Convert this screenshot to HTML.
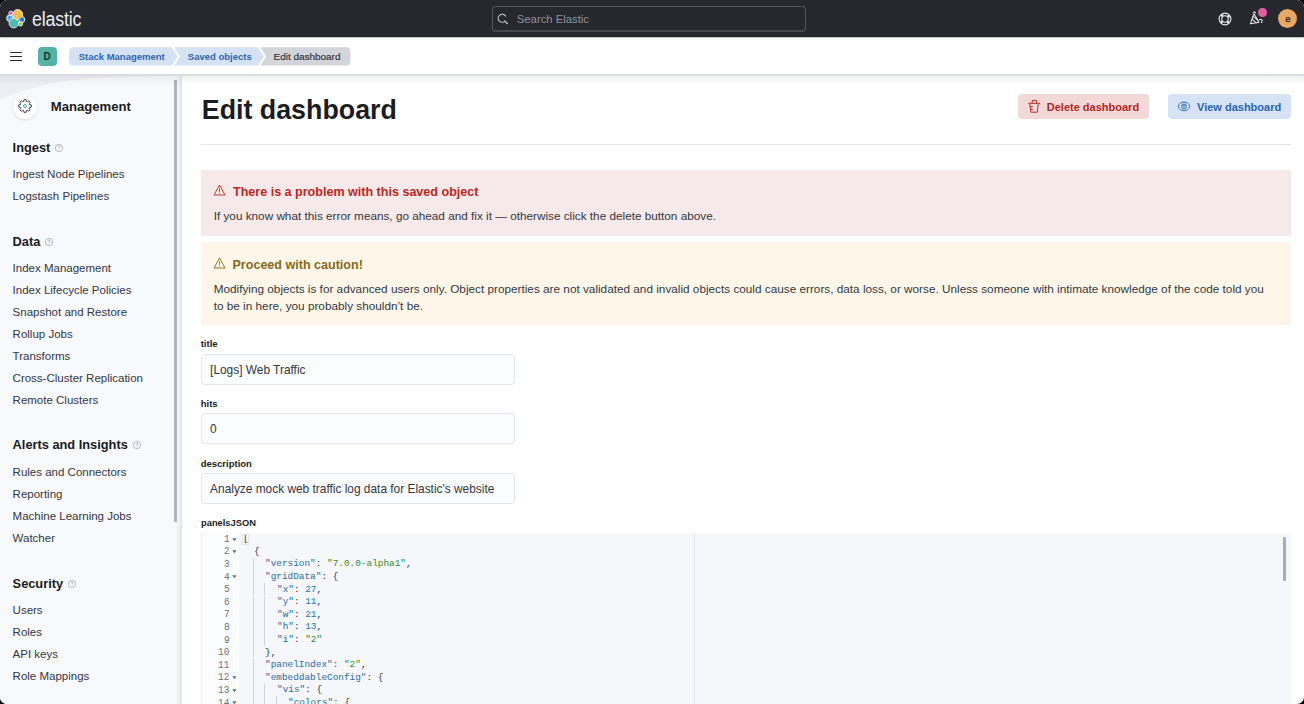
<!DOCTYPE html>
<html><head><meta charset="utf-8">
<style>
*{box-sizing:border-box;margin:0;padding:0}
html,body{width:1304px;height:704px;overflow:hidden;background:#000}
body{font-family:"Liberation Sans",sans-serif}
#app{position:absolute;left:0;top:0;width:1304px;height:704px;border-radius:7px;overflow:hidden;background:#fff}
.a{position:absolute}
.t{position:absolute;white-space:pre}
</style></head><body><div id="app">
<div class="a" style="left:0px;top:0px;width:1304px;height:37px;background:#26282d"></div>
<div class="a" style="left:0px;top:36px;width:1304px;height:1px;background:#1d1e22;box-shadow:0 1px 1.5px rgba(0,0,0,.35);z-index:4"></div>
<svg class="a" style="left:5px;top:8px" width="22" height="22" viewBox="0 0 22 22">
<g stroke="#fff" stroke-width="0.9">
<circle cx="12.7" cy="6.5" r="4.9" fill="#f0bf4b"/>
<circle cx="4.9" cy="10.2" r="3.3" fill="#4fa7ef"/>
<circle cx="16.8" cy="11.6" r="3.0" fill="#2f77d2"/>
<circle cx="8.8" cy="15.2" r="4.7" fill="#4cbcb0"/>
<circle cx="15.5" cy="15.9" r="2.1" fill="#8bc53f"/>
<circle cx="5.9" cy="5.2" r="2.0" fill="#e6468e"/>
</g>
<circle cx="12.7" cy="6.5" r="4.5" fill="#f0bf4b"/>
<circle cx="8.8" cy="15.2" r="4.3" fill="#4cbcb0"/>
</svg>
<div class="t" style="left:31.80px;top:9.17px;font-size:20px;line-height:20px;font-weight:normal;color:#eceef1;letter-spacing:-0.2px;transform:scaleX(0.89);transform-origin:0 0;">elastic</div>
<div class="a" style="left:492px;top:6px;width:314px;height:25.5px;border:1px solid #53565d;border-bottom:2px solid #46494f;border-radius:4px;background:#26282d"></div>
<svg class="a" style="left:497px;top:13px" width="12" height="12" viewBox="0 0 12 12"><circle cx="5.2" cy="5.3" r="4" fill="none" stroke="#c9cbd0" stroke-width="1.1" stroke-dasharray="20 4" transform="rotate(40 5.2 5.3)"/><path d="M8 8.3 L10.8 11" stroke="#c9cbd0" stroke-width="1.1"/></svg>
<div class="t" style="left:516.80px;top:13.63px;font-size:11.3px;line-height:11.3px;font-weight:normal;color:#8f9196;">Search Elastic</div>
<svg class="a" style="left:1216.5px;top:10.5px" width="16" height="16" viewBox="0 0 16 16" fill="none" stroke="#e8e9ec"><circle cx="8" cy="8" r="5.9" stroke-width="1.1"/><circle cx="8" cy="8" r="3.2" stroke-width="1.1"/><circle cx="8" cy="8" r="4.55" stroke-width="1.8" stroke-dasharray="2.4 4.75" stroke-dashoffset="-2.38"/></svg>
<svg class="a" style="left:1246px;top:6px" width="24" height="22" viewBox="0 0 24 22" fill="none" stroke="#e8e9ec" stroke-width="1.05" stroke-linejoin="round" stroke-linecap="round"><path d="M4.4 17.8 L7.9 7.6 L13 16.2 Z"/><path d="M6.1 13.2 L10.2 16.9 M7.1 10.3 L11.6 14"/><path d="M7.2 6.3 Q8.4 5.4 9.6 6.7"/><path d="M13.4 13.6 Q15.8 13 16.1 14.3 L15.6 16.6"/></svg>
<div class="a" style="left:1258.2px;top:8.2px;width:8.6px;height:8.6px;border-radius:50%;background:#dd5fa0"></div>
<div class="a" style="left:1277.8px;top:8.8px;width:19.6px;height:19.6px;border-radius:50%;background:#eba865"></div>
<div class="t" style="left:1285.20px;top:13.96px;font-size:9.5px;line-height:9.5px;font-weight:normal;color:#1a1c21;-webkit-text-stroke:0.25px #1a1c21;">e</div>
<div class="a" style="left:0px;top:37px;width:1304px;height:37px;background:#fff;z-index:2"></div>
<div class="a" style="left:0px;top:73.8px;width:1304px;height:2px;background:#d8dbe1;z-index:2"></div>
<div class="a" style="left:0px;top:75.8px;width:1304px;height:10px;background:linear-gradient(to bottom, rgba(60,60,50,.07), rgba(60,60,50,.025) 60%, rgba(60,60,50,0));z-index:2"></div>
<div class="a" style="left:9.5px;top:51.5px;width:12.5px;height:1.5px;background:#25282f;border-radius:1px;z-index:3"></div>
<div class="a" style="left:9.5px;top:55.6px;width:12.5px;height:1.5px;background:#25282f;border-radius:1px;z-index:3"></div>
<div class="a" style="left:9.5px;top:59.5px;width:12.5px;height:1.5px;background:#25282f;border-radius:1px;z-index:3"></div>
<div class="a" style="left:38px;top:47px;width:18.5px;height:18.5px;background:#54b3a6;border-radius:4px;z-index:3"></div>
<div class="t" style="left:43.60px;top:51.83px;font-size:10px;line-height:10px;font-weight:bold;color:#1c2e2b;z-index:3;">D</div>
<svg class="a" style="left:0;top:37px;z-index:3" width="400" height="37" viewBox="0 37 400 37">
<path d="M73.2 47.2 H171.8 L177.8 56.4 L171.8 65.6 H73.2 Q69.2 65.6 69.2 61.6 V51.2 Q69.2 47.2 73.2 47.2 Z" fill="#d4e2f3"/>
<path d="M174 47.2 H258 L264 56.4 L258 65.6 H174 L180 56.4 Z" fill="#d4e2f3"/>
<path d="M260.3 47.2 H346.4 Q350.4 47.2 350.4 51.2 V61.6 Q350.4 65.6 346.4 65.6 H260.3 L266.3 56.4 Z" fill="#d3d5da"/>
</svg>
<div class="t" style="left:78.70px;top:52.06px;font-size:9.5px;line-height:9.5px;font-weight:bold;color:#2e65ad;z-index:3;">Stack Management</div>
<div class="t" style="left:187.80px;top:52.06px;font-size:9.5px;line-height:9.5px;font-weight:bold;color:#2e65ad;z-index:3;">Saved objects</div>
<div class="t" style="left:273.50px;top:51.67px;font-size:9.96px;line-height:9.96px;font-weight:normal;color:#343741;z-index:3;-webkit-text-stroke:0.2px #343741;">Edit dashboard</div>
<div class="a" style="left:0px;top:74px;width:182px;height:630px;background:#f8f9fc"></div>
<svg class="a" style="left:0;top:74px" width="178" height="40" viewBox="0 74 178 40"><path d="M0 74 H178 V76 C120 76 70 78 40 86 C25 90 12 95 0 99.5 Z" fill="#eceff4"/></svg>
<div class="a" style="left:175px;top:74px;width:7px;height:630px;background:linear-gradient(to right, rgba(220,224,230,0) 0%, rgba(220,224,230,.35) 55%, rgba(214,218,225,.75) 100%)"></div>
<div class="a" style="left:174px;top:80px;width:3px;height:442px;background:#b0b4bc"></div>
<div class="a" style="left:12.6px;top:94.5px;width:24.6px;height:24.6px;border-radius:50%;background:#fff;box-shadow:0 1px 3px rgba(0,0,0,.12)"></div>
<svg class="a" style="left:16.9px;top:98.3px" width="16" height="16" viewBox="0 0 16 16"><path fill="none" stroke="#343741" stroke-width="0.95" stroke-linejoin="round" d="M6.61 3.51 L6.92 1.69 L9.08 1.69 L9.39 3.51 L10.19 3.84 L11.69 2.77 L13.23 4.31 L12.16 5.81 L12.49 6.61 L14.31 6.92 L14.31 9.08 L12.49 9.39 L12.16 10.19 L13.23 11.69 L11.69 13.23 L10.19 12.16 L9.39 12.49 L9.08 14.31 L6.92 14.31 L6.61 12.49 L5.81 12.16 L4.31 13.23 L2.77 11.69 L3.84 10.19 L3.51 9.39 L1.69 9.08 L1.69 6.92 L3.51 6.61 L3.84 5.81 L2.77 4.31 L4.31 2.77 L5.81 3.84 Z"/><circle cx="8" cy="8" r="1.5" fill="none" stroke="#40ada5" stroke-width="1"/></svg>
<div class="t" style="left:50.80px;top:99.91px;font-size:13.1px;line-height:13.1px;font-weight:bold;color:#1a1c21;">Management</div>
<div class="t" style="left:12.60px;top:141.66px;font-size:12.8px;line-height:12.8px;font-weight:bold;color:#1a1c21;">Ingest</div>
<svg class="a" style="left:54.30px;top:142.60px" width="10" height="10" viewBox="0 0 10 10" fill="none" stroke="#a3a8b0" stroke-width="0.75"><circle cx="5" cy="5" r="3.7"/><path d="M3.9 4.1 Q3.9 3 5 3 Q6.1 3 6.1 4 Q6.1 4.7 5 5.2 V5.9 M5 6.6 V7.2"/></svg>
<div class="t" style="left:12.60px;top:168.77px;font-size:11.5px;line-height:11.5px;font-weight:normal;color:#343741;">Ingest Node Pipelines</div>
<div class="t" style="left:12.60px;top:190.77px;font-size:11.5px;line-height:11.5px;font-weight:normal;color:#343741;">Logstash Pipelines</div>
<div class="t" style="left:12.60px;top:236.26px;font-size:12.8px;line-height:12.8px;font-weight:bold;color:#1a1c21;">Data</div>
<svg class="a" style="left:44.34px;top:237.20px" width="10" height="10" viewBox="0 0 10 10" fill="none" stroke="#a3a8b0" stroke-width="0.75"><circle cx="5" cy="5" r="3.7"/><path d="M3.9 4.1 Q3.9 3 5 3 Q6.1 3 6.1 4 Q6.1 4.7 5 5.2 V5.9 M5 6.6 V7.2"/></svg>
<div class="t" style="left:12.60px;top:263.37px;font-size:11.5px;line-height:11.5px;font-weight:normal;color:#343741;">Index Management</div>
<div class="t" style="left:12.60px;top:285.37px;font-size:11.5px;line-height:11.5px;font-weight:normal;color:#343741;">Index Lifecycle Policies</div>
<div class="t" style="left:12.60px;top:307.37px;font-size:11.5px;line-height:11.5px;font-weight:normal;color:#343741;">Snapshot and Restore</div>
<div class="t" style="left:12.60px;top:329.37px;font-size:11.5px;line-height:11.5px;font-weight:normal;color:#343741;">Rollup Jobs</div>
<div class="t" style="left:12.60px;top:351.37px;font-size:11.5px;line-height:11.5px;font-weight:normal;color:#343741;">Transforms</div>
<div class="t" style="left:12.60px;top:373.37px;font-size:11.5px;line-height:11.5px;font-weight:normal;color:#343741;">Cross-Cluster Replication</div>
<div class="t" style="left:12.60px;top:395.37px;font-size:11.5px;line-height:11.5px;font-weight:normal;color:#343741;">Remote Clusters</div>
<div class="t" style="left:12.60px;top:439.46px;font-size:12.8px;line-height:12.8px;font-weight:bold;color:#1a1c21;">Alerts and Insights</div>
<svg class="a" style="left:131.81px;top:440.40px" width="10" height="10" viewBox="0 0 10 10" fill="none" stroke="#a3a8b0" stroke-width="0.75"><circle cx="5" cy="5" r="3.7"/><path d="M3.9 4.1 Q3.9 3 5 3 Q6.1 3 6.1 4 Q6.1 4.7 5 5.2 V5.9 M5 6.6 V7.2"/></svg>
<div class="t" style="left:12.60px;top:466.57px;font-size:11.5px;line-height:11.5px;font-weight:normal;color:#343741;">Rules and Connectors</div>
<div class="t" style="left:12.60px;top:488.57px;font-size:11.5px;line-height:11.5px;font-weight:normal;color:#343741;">Reporting</div>
<div class="t" style="left:12.60px;top:510.57px;font-size:11.5px;line-height:11.5px;font-weight:normal;color:#343741;">Machine Learning Jobs</div>
<div class="t" style="left:12.60px;top:532.57px;font-size:11.5px;line-height:11.5px;font-weight:normal;color:#343741;">Watcher</div>
<div class="t" style="left:12.60px;top:578.16px;font-size:12.8px;line-height:12.8px;font-weight:bold;color:#1a1c21;">Security</div>
<svg class="a" style="left:67.11px;top:579.10px" width="10" height="10" viewBox="0 0 10 10" fill="none" stroke="#a3a8b0" stroke-width="0.75"><circle cx="5" cy="5" r="3.7"/><path d="M3.9 4.1 Q3.9 3 5 3 Q6.1 3 6.1 4 Q6.1 4.7 5 5.2 V5.9 M5 6.6 V7.2"/></svg>
<div class="t" style="left:12.60px;top:605.27px;font-size:11.5px;line-height:11.5px;font-weight:normal;color:#343741;">Users</div>
<div class="t" style="left:12.60px;top:627.27px;font-size:11.5px;line-height:11.5px;font-weight:normal;color:#343741;">Roles</div>
<div class="t" style="left:12.60px;top:649.27px;font-size:11.5px;line-height:11.5px;font-weight:normal;color:#343741;">API keys</div>
<div class="t" style="left:12.60px;top:671.27px;font-size:11.5px;line-height:11.5px;font-weight:normal;color:#343741;">Role Mappings</div>
<div class="t" style="left:201.80px;top:97.41px;font-size:26.8px;line-height:26.8px;font-weight:bold;color:#1a1c21;">Edit dashboard</div>
<div class="a" style="left:201px;top:143.5px;width:1090px;height:1px;background:#e3e8f0"></div>
<div class="a" style="left:1018px;top:94px;width:131px;height:25px;background:#f2d9d8;border-radius:4px"></div>
<svg class="a" style="left:1026px;top:99px" width="16" height="16" viewBox="0 0 16 16" fill="none" stroke="#b7302a" stroke-width="1" stroke-linejoin="round"><path d="M2.1 4.3 H14 M6.2 4.3 V1.4 H10.4 V4.3 M3.8 5 L4.9 13.2 H11.3 L12.2 5 M4.3 7.6 H6.8 M4.6 10.4 H6.8"/></svg>
<div class="t" style="left:1046.80px;top:101.59px;font-size:11px;line-height:11px;font-weight:bold;color:#b4251d;">Delete dashboard</div>
<div class="a" style="left:1168px;top:94px;width:122.5px;height:25px;background:#d5e3f4;border-radius:4px"></div>
<svg class="a" style="left:1176px;top:99px" width="16" height="15" viewBox="0 0 16 15" fill="none" stroke="#2f68ad" stroke-width="1"><path d="M2.2 7.4 C3.2 4.4 5.2 3.1 8 3.1 C10.8 3.1 12.8 4.4 13.8 7.4 C12.8 10.4 10.8 11.6 8 11.6 C5.2 11.6 3.2 10.4 2.2 7.4 Z"/><circle cx="8" cy="7.4" r="2.4"/><circle cx="8" cy="7.2" r="0.9" stroke-width="0.8"/></svg>
<div class="t" style="left:1197.00px;top:101.59px;font-size:11px;line-height:11px;font-weight:bold;color:#2a65ad;">View dashboard</div>
<div class="a" style="left:201px;top:169.5px;width:1090px;height:66.5px;background:#f6e9e9"></div>
<svg class="a" style="left:213px;top:184.4px" width="13" height="12" viewBox="0 0 13 12" fill="none" stroke="#bd271e" stroke-width="0.9"><path d="M6.5 1 L12 11 H1 Z"/><path d="M6.5 4.3 V7.8 M6.5 8.8 V9.7"/></svg>
<div class="t" style="left:233.00px;top:185.87px;font-size:12.56px;line-height:12.56px;font-weight:bold;color:#bd271e;">There is a problem with this saved object</div>
<div class="t" style="left:213.70px;top:210.35px;font-size:11.76px;line-height:11.76px;font-weight:normal;color:#343741;">If you know what this error means, go ahead and fix it — otherwise click the delete button above.</div>
<div class="a" style="left:201px;top:242.3px;width:1090px;height:83.2px;background:#fef7e9"></div>
<svg class="a" style="left:213px;top:257.4px" width="13" height="12" viewBox="0 0 13 12" fill="none" stroke="#8a6a0a" stroke-width="0.9"><path d="M6.5 1 L12 11 H1 Z"/><path d="M6.5 4.3 V7.8 M6.5 8.8 V9.7"/></svg>
<div class="t" style="left:232.50px;top:259.07px;font-size:12.56px;line-height:12.56px;font-weight:bold;color:#86691c;">Proceed with caution!</div>
<div class="t" style="left:213.70px;top:283.13px;font-size:11.78px;line-height:11.78px;font-weight:normal;color:#343741;">Modifying objects is for advanced users only. Object properties are not validated and invalid objects could cause errors, data loss, or worse. Unless someone with intimate knowledge of the code told you</div>
<div class="t" style="left:213.70px;top:299.53px;font-size:11.78px;line-height:11.78px;font-weight:normal;color:#343741;">to be in here, you probably shouldn’t be.</div>
<div class="t" style="left:200.70px;top:339.26px;font-size:9.5px;line-height:9.5px;font-weight:bold;color:#1a1c21;">title</div>
<div class="a" style="left:200.7px;top:354px;width:314.3px;height:31.3px;background:#fbfcfd;border:1px solid #e2e6ee;border-radius:4px"></div>
<div class="t" style="left:210.10px;top:364.73px;font-size:11.9px;line-height:11.9px;font-weight:normal;color:#343741;">[Logs] Web Traffic</div>
<div class="t" style="left:200.70px;top:398.96px;font-size:9.5px;line-height:9.5px;font-weight:bold;color:#1a1c21;">hits</div>
<div class="a" style="left:200.7px;top:413.2px;width:314.3px;height:31.3px;background:#fbfcfd;border:1px solid #e2e6ee;border-radius:4px"></div>
<div class="t" style="left:210.10px;top:423.93px;font-size:11.9px;line-height:11.9px;font-weight:normal;color:#343741;">0</div>
<div class="t" style="left:200.70px;top:458.66px;font-size:9.5px;line-height:9.5px;font-weight:bold;color:#1a1c21;">description</div>
<div class="a" style="left:200.7px;top:472.9px;width:314.3px;height:31.3px;background:#fbfcfd;border:1px solid #e2e6ee;border-radius:4px"></div>
<div class="t" style="left:210.10px;top:483.63px;font-size:11.9px;line-height:11.9px;font-weight:normal;color:#343741;">Analyze mock web traffic log data for Elastic&#x27;s website</div>
<div class="t" style="left:201.00px;top:518.79px;font-size:9.34px;line-height:9.34px;font-weight:bold;color:#1a1c21;">panelsJSON</div>
<div class="a" style="left:201px;top:532.7px;width:1090px;height:180px;background:#f5f7fa"></div>
<div class="a" style="left:201px;top:532.7px;width:38px;height:180px;background:#fbfcfd;border-left:1px solid #e9ecf1"></div>
<div class="a" style="left:694px;top:532.7px;width:1px;height:180px;background:#e3e6ed"></div>
<div class="a" style="left:1282.8px;top:537.3px;width:3.2px;height:43.5px;background:#a9adb6;border-radius:1px"></div>
<div class="t" style="left:223.75px;top:533.80px;font-size:10.4px;line-height:10.4px;font-weight:normal;color:#6a717d;font-family:'Liberation Mono',monospace;transform:scaleX(0.905);transform-origin:0 0;">1</div>
<svg class="a" style="left:232px;top:537.50px" width="5" height="3.5" viewBox="0 0 5 3.5"><path d="M0.2 0.3 H4.6 L2.4 3.2 Z" fill="#6a7079"/></svg>
<div class="t" style="left:242.80px;top:534.22px;font-size:9.9px;line-height:9.9px;font-weight:normal;color:#343741;font-family:'Liberation Mono',monospace;transform:scaleX(0.9515);transform-origin:0 0;"><span style="color:#343741">[</span></div>
<div class="t" style="left:223.75px;top:546.40px;font-size:10.4px;line-height:10.4px;font-weight:normal;color:#6a717d;font-family:'Liberation Mono',monospace;transform:scaleX(0.905);transform-origin:0 0;">2</div>
<svg class="a" style="left:232px;top:550.10px" width="5" height="3.5" viewBox="0 0 5 3.5"><path d="M0.2 0.3 H4.6 L2.4 3.2 Z" fill="#6a7079"/></svg>
<div class="t" style="left:254.10px;top:546.82px;font-size:9.9px;line-height:9.9px;font-weight:normal;color:#343741;font-family:'Liberation Mono',monospace;transform:scaleX(0.9515);transform-origin:0 0;"><span style="color:#343741">{</span></div>
<div class="t" style="left:223.75px;top:559.00px;font-size:10.4px;line-height:10.4px;font-weight:normal;color:#6a717d;font-family:'Liberation Mono',monospace;transform:scaleX(0.905);transform-origin:0 0;">3</div>
<div class="a" style="left:253.10000000000002px;top:557.7px;width:1px;height:12.6px;background:#d0d4db"></div>
<div class="t" style="left:265.40px;top:559.42px;font-size:9.9px;line-height:9.9px;font-weight:normal;color:#343741;font-family:'Liberation Mono',monospace;transform:scaleX(0.9515);transform-origin:0 0;"><span style="color:#2f6c9c">&quot;version&quot;</span><span style="color:#343741">:&nbsp;</span><span style="color:#3a8a36">&quot;7.0.0-alpha1&quot;</span><span style="color:#343741">,</span></div>
<div class="t" style="left:223.75px;top:571.60px;font-size:10.4px;line-height:10.4px;font-weight:normal;color:#6a717d;font-family:'Liberation Mono',monospace;transform:scaleX(0.905);transform-origin:0 0;">4</div>
<svg class="a" style="left:232px;top:575.30px" width="5" height="3.5" viewBox="0 0 5 3.5"><path d="M0.2 0.3 H4.6 L2.4 3.2 Z" fill="#6a7079"/></svg>
<div class="a" style="left:253.10000000000002px;top:570.3px;width:1px;height:12.6px;background:#d0d4db"></div>
<div class="t" style="left:265.40px;top:572.02px;font-size:9.9px;line-height:9.9px;font-weight:normal;color:#343741;font-family:'Liberation Mono',monospace;transform:scaleX(0.9515);transform-origin:0 0;"><span style="color:#2f6c9c">&quot;gridData&quot;</span><span style="color:#343741">:&nbsp;{</span></div>
<div class="t" style="left:223.75px;top:584.20px;font-size:10.4px;line-height:10.4px;font-weight:normal;color:#6a717d;font-family:'Liberation Mono',monospace;transform:scaleX(0.905);transform-origin:0 0;">5</div>
<div class="a" style="left:253.10000000000002px;top:582.9px;width:1px;height:12.6px;background:#d0d4db"></div>
<div class="a" style="left:264.40000000000003px;top:582.9px;width:1px;height:12.6px;background:#d0d4db"></div>
<div class="t" style="left:276.70px;top:584.62px;font-size:9.9px;line-height:9.9px;font-weight:normal;color:#343741;font-family:'Liberation Mono',monospace;transform:scaleX(0.9515);transform-origin:0 0;"><span style="color:#2f6c9c">&quot;x&quot;</span><span style="color:#343741">:&nbsp;</span><span style="color:#2a76a8">27</span><span style="color:#343741">,</span></div>
<div class="t" style="left:223.75px;top:596.80px;font-size:10.4px;line-height:10.4px;font-weight:normal;color:#6a717d;font-family:'Liberation Mono',monospace;transform:scaleX(0.905);transform-origin:0 0;">6</div>
<div class="a" style="left:253.10000000000002px;top:595.5px;width:1px;height:12.6px;background:#d0d4db"></div>
<div class="a" style="left:264.40000000000003px;top:595.5px;width:1px;height:12.6px;background:#d0d4db"></div>
<div class="t" style="left:276.70px;top:597.22px;font-size:9.9px;line-height:9.9px;font-weight:normal;color:#343741;font-family:'Liberation Mono',monospace;transform:scaleX(0.9515);transform-origin:0 0;"><span style="color:#2f6c9c">&quot;y&quot;</span><span style="color:#343741">:&nbsp;</span><span style="color:#2a76a8">11</span><span style="color:#343741">,</span></div>
<div class="t" style="left:223.75px;top:609.40px;font-size:10.4px;line-height:10.4px;font-weight:normal;color:#6a717d;font-family:'Liberation Mono',monospace;transform:scaleX(0.905);transform-origin:0 0;">7</div>
<div class="a" style="left:253.10000000000002px;top:608.1px;width:1px;height:12.6px;background:#d0d4db"></div>
<div class="a" style="left:264.40000000000003px;top:608.1px;width:1px;height:12.6px;background:#d0d4db"></div>
<div class="t" style="left:276.70px;top:609.82px;font-size:9.9px;line-height:9.9px;font-weight:normal;color:#343741;font-family:'Liberation Mono',monospace;transform:scaleX(0.9515);transform-origin:0 0;"><span style="color:#2f6c9c">&quot;w&quot;</span><span style="color:#343741">:&nbsp;</span><span style="color:#2a76a8">21</span><span style="color:#343741">,</span></div>
<div class="t" style="left:223.75px;top:622.00px;font-size:10.4px;line-height:10.4px;font-weight:normal;color:#6a717d;font-family:'Liberation Mono',monospace;transform:scaleX(0.905);transform-origin:0 0;">8</div>
<div class="a" style="left:253.10000000000002px;top:620.7px;width:1px;height:12.6px;background:#d0d4db"></div>
<div class="a" style="left:264.40000000000003px;top:620.7px;width:1px;height:12.6px;background:#d0d4db"></div>
<div class="t" style="left:276.70px;top:622.42px;font-size:9.9px;line-height:9.9px;font-weight:normal;color:#343741;font-family:'Liberation Mono',monospace;transform:scaleX(0.9515);transform-origin:0 0;"><span style="color:#2f6c9c">&quot;h&quot;</span><span style="color:#343741">:&nbsp;</span><span style="color:#2a76a8">13</span><span style="color:#343741">,</span></div>
<div class="t" style="left:223.75px;top:634.60px;font-size:10.4px;line-height:10.4px;font-weight:normal;color:#6a717d;font-family:'Liberation Mono',monospace;transform:scaleX(0.905);transform-origin:0 0;">9</div>
<div class="a" style="left:253.10000000000002px;top:633.3px;width:1px;height:12.6px;background:#d0d4db"></div>
<div class="a" style="left:264.40000000000003px;top:633.3px;width:1px;height:12.6px;background:#d0d4db"></div>
<div class="t" style="left:276.70px;top:635.02px;font-size:9.9px;line-height:9.9px;font-weight:normal;color:#343741;font-family:'Liberation Mono',monospace;transform:scaleX(0.9515);transform-origin:0 0;"><span style="color:#2f6c9c">&quot;i&quot;</span><span style="color:#343741">:&nbsp;</span><span style="color:#3a8a36">&quot;2&quot;</span></div>
<div class="t" style="left:218.10px;top:647.20px;font-size:10.4px;line-height:10.4px;font-weight:normal;color:#6a717d;font-family:'Liberation Mono',monospace;transform:scaleX(0.905);transform-origin:0 0;">10</div>
<div class="a" style="left:253.10000000000002px;top:645.9px;width:1px;height:12.6px;background:#d0d4db"></div>
<div class="t" style="left:265.40px;top:647.62px;font-size:9.9px;line-height:9.9px;font-weight:normal;color:#343741;font-family:'Liberation Mono',monospace;transform:scaleX(0.9515);transform-origin:0 0;"><span style="color:#343741">},</span></div>
<div class="t" style="left:218.10px;top:659.80px;font-size:10.4px;line-height:10.4px;font-weight:normal;color:#6a717d;font-family:'Liberation Mono',monospace;transform:scaleX(0.905);transform-origin:0 0;">11</div>
<div class="a" style="left:253.10000000000002px;top:658.5px;width:1px;height:12.6px;background:#d0d4db"></div>
<div class="t" style="left:265.40px;top:660.22px;font-size:9.9px;line-height:9.9px;font-weight:normal;color:#343741;font-family:'Liberation Mono',monospace;transform:scaleX(0.9515);transform-origin:0 0;"><span style="color:#2f6c9c">&quot;panelIndex&quot;</span><span style="color:#343741">:&nbsp;</span><span style="color:#3a8a36">&quot;2&quot;</span><span style="color:#343741">,</span></div>
<div class="t" style="left:218.10px;top:672.40px;font-size:10.4px;line-height:10.4px;font-weight:normal;color:#6a717d;font-family:'Liberation Mono',monospace;transform:scaleX(0.905);transform-origin:0 0;">12</div>
<svg class="a" style="left:232px;top:676.10px" width="5" height="3.5" viewBox="0 0 5 3.5"><path d="M0.2 0.3 H4.6 L2.4 3.2 Z" fill="#6a7079"/></svg>
<div class="a" style="left:253.10000000000002px;top:671.1px;width:1px;height:12.6px;background:#d0d4db"></div>
<div class="t" style="left:265.40px;top:672.82px;font-size:9.9px;line-height:9.9px;font-weight:normal;color:#343741;font-family:'Liberation Mono',monospace;transform:scaleX(0.9515);transform-origin:0 0;"><span style="color:#2f6c9c">&quot;embeddableConfig&quot;</span><span style="color:#343741">:&nbsp;{</span></div>
<div class="t" style="left:218.10px;top:685.00px;font-size:10.4px;line-height:10.4px;font-weight:normal;color:#6a717d;font-family:'Liberation Mono',monospace;transform:scaleX(0.905);transform-origin:0 0;">13</div>
<svg class="a" style="left:232px;top:688.70px" width="5" height="3.5" viewBox="0 0 5 3.5"><path d="M0.2 0.3 H4.6 L2.4 3.2 Z" fill="#6a7079"/></svg>
<div class="a" style="left:253.10000000000002px;top:683.6999999999999px;width:1px;height:12.6px;background:#d0d4db"></div>
<div class="a" style="left:264.40000000000003px;top:683.6999999999999px;width:1px;height:12.6px;background:#d0d4db"></div>
<div class="t" style="left:276.70px;top:685.42px;font-size:9.9px;line-height:9.9px;font-weight:normal;color:#343741;font-family:'Liberation Mono',monospace;transform:scaleX(0.9515);transform-origin:0 0;"><span style="color:#2f6c9c">&quot;vis&quot;</span><span style="color:#343741">:&nbsp;{</span></div>
<div class="t" style="left:218.10px;top:697.60px;font-size:10.4px;line-height:10.4px;font-weight:normal;color:#6a717d;font-family:'Liberation Mono',monospace;transform:scaleX(0.905);transform-origin:0 0;">14</div>
<svg class="a" style="left:232px;top:701.30px" width="5" height="3.5" viewBox="0 0 5 3.5"><path d="M0.2 0.3 H4.6 L2.4 3.2 Z" fill="#6a7079"/></svg>
<div class="a" style="left:253.10000000000002px;top:696.3px;width:1px;height:12.6px;background:#d0d4db"></div>
<div class="a" style="left:264.40000000000003px;top:696.3px;width:1px;height:12.6px;background:#d0d4db"></div>
<div class="a" style="left:275.70000000000005px;top:696.3px;width:1px;height:12.6px;background:#d0d4db"></div>
<div class="t" style="left:288.00px;top:698.02px;font-size:9.9px;line-height:9.9px;font-weight:normal;color:#343741;font-family:'Liberation Mono',monospace;transform:scaleX(0.9515);transform-origin:0 0;"><span style="color:#2f6c9c">&quot;colors&quot;</span><span style="color:#343741">:&nbsp;{</span></div>
<div class="a" style="left:242px;top:533.5px;width:6.5px;height:11.5px;border:1px solid #e3e6ec;background:transparent"></div>
</div></body></html>
